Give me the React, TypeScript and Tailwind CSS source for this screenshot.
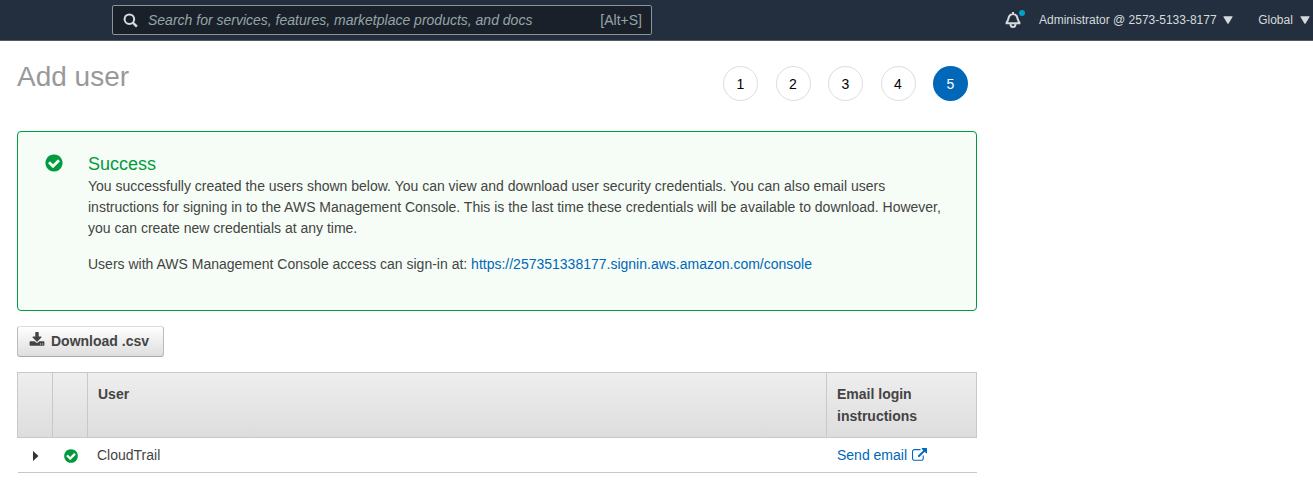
import React from "react";

const ICONS = {
  check:
    "M1412 734q0-28-18-46l-91-90q-19-19-45-19t-45 19l-408 407-226-226q-19-19-45-19t-45 19l-91 90q-18 18-18 46 0 27 18 45l362 362q19 19 45 19 27 0 46-19l543-543q18-18 18-45zm252 162q0 209-103 385.5t-279.5 279.5-385.5 103-385.5-103-279.5-279.5-103-385.5 103-385.5 279.5-279.5 385.5-103 385.5 103 279.5 279.5 103 385.5z",
  download:
    "M1344 1344q0-26-19-45t-45-19-45 19-19 45 19 45 45 19 45-19 19-45zm256 0q0-26-19-45t-45-19-45 19-19 45 19 45 45 19 45-19 19-45zm128-224v320q0 40-28 68t-68 28h-1472q-40 0-68-28t-28-68v-320q0-40 28-68t68-28h465l135 136q58 56 136 56t136-56l136-136h464q40 0 68 28t28 68zm-325-569q17 41-14 70l-448 448q-18 19-45 19t-45-19l-448-448q-31-29-14-70 17-39 59-39h256v-448q0-26 19-45t45-19h256q26 0 45 19t19 45v448h256q42 0 59 39z",
  external:
    "M1408 928v320q0 119-84.5 203.5t-203.5 84.5h-832q-119 0-203.5-84.5t-84.5-203.5v-832q0-119 84.5-203.5t203.5-84.5h704q14 0 23 9t9 23v64q0 14-9 23t-23 9h-704q-66 0-113 47t-47 113v832q0 66 47 113t113 47h832q66 0 113-47t47-113v-320q0-14 9-23t23-9h64q14 0 23 9t9 23zm384-864v512q0 26-19 45t-45 19-45-19l-176-176-652 652q-10 10-23 10t-23-10l-114-114q-10-10-10-23t10-23l652-652-176-176q-19-19-19-45t19-45 45-19h512q26 0 45 19t19 45z",
};

function Icon({ name, className }: { name: keyof typeof ICONS; className: string }) {
  return (
    <svg viewBox="0 0 1792 1792" fill="currentColor" className={className}>
      <path d={ICONS[name]} />
    </svg>
  );
}

function Caret({ className }: { className: string }) {
  return (
    <svg viewBox="0 0 10 8" className={className} fill="#d5dbdb">
      <path d="M0.8 0.3h8.4q.7 0 .3.7L5.6 7.4q-.6.7-1.2 0L.5 1Q.1.3.8.3z" />
    </svg>
  );
}

function TopBar() {
  return (
    <header className="flex h-[41px] items-start border-b border-[#545b64] bg-[#232f3e] pl-28">
      <div className="mt-[5px] flex h-[30px] w-[540px] items-center rounded-[2px] border border-[#879596] bg-[#1a202a] pr-[9px] pl-[10px] text-[14px] text-[#95a5a6]">
        <svg viewBox="0 0 16 16" className="size-[15px]" fill="none" stroke="#d5dbdb" strokeWidth="2.2">
          <circle cx="6.8" cy="6.6" r="5.1" />
          <path d="M10.5 10.3l4.3 4.3" strokeWidth="2.6" />
        </svg>
        <span className="ml-[10px] italic">Search for services, features, marketplace products, and docs</span>
        <span className="ml-auto">[Alt+S]</span>
      </div>
      <div className="ml-[352px] flex h-10 items-center whitespace-nowrap text-[12px] text-[#d5dbdb]">
        <span className="relative flex size-[18px] items-center justify-center">
          <svg viewBox="0 0 18 18" className="size-[18px]" fill="none" stroke="#d5dbdb" strokeWidth="2" strokeLinejoin="round">
            <path d="M1.6 12.2h14.8M2 12.1C4.6 10 4 7.5 5.2 5.2Q6.4 3 9 3t3.8 2.2C14 7.5 13.4 10 16 12.1M9 1v2" />
            <path d="M6.6 13v1q.2 2 2.4 2t2.4-2v-1" />
          </svg>
          <span className="absolute top-[-1px] left-[15px] size-[6px] rounded-full bg-[#00a1c9]" />
        </span>
        <span className="ml-[17px]">Administrator @ 2573-5133-8177</span>
        <Caret className="ml-[6px] h-2 w-[10px]" />
        <span className="ml-[25.5px]">Global</span>
        <Caret className="ml-[7px] h-2 w-[10px] shrink-0" />
      </div>
    </header>
  );
}

function Steps() {
  return (
    <ol className="mt-[25px] mr-[9px] flex gap-[17.5px] text-[14px] text-black">
      {[1, 2, 3, 4].map((n) => (
        <li key={n} className="flex size-[35px] items-center justify-center rounded-full border border-[#ddd] pt-[2px]">
          {n}
        </li>
      ))}
      <li className="flex size-[35px] items-center justify-center rounded-full bg-[#0067b9] pt-[2px] text-white">5</li>
    </ol>
  );
}

export default function App() {
  return (
    <div className="h-[480px] overflow-hidden bg-white font-['Liberation_Sans',Arial,sans-serif] text-[14px] text-[#444]">
      <TopBar />
      <main className="ml-[17px] w-[960px]">
        <div className="flex h-[90px] items-start justify-between">
          <h1 className="mt-[18px] text-[28px] leading-9 text-[#999]">Add user</h1>
          <Steps />
        </div>

        <section className="flex h-[180px] rounded-[4px] border border-[#009b3e] bg-[#f6fdf6] pl-[26px]">
          <Icon name="check" className="mt-[21px] size-5 shrink-0 text-[#009b3e]" />
          <div className="ml-6 w-[870px] pt-[21px] leading-[21px]">
            <h2 className="mb-px text-[18px] leading-[22px] text-[#009b3e]">Success</h2>
            <p>
              You successfully created the users shown below. You can view and download user security credentials. You can also email users
              <br />
              instructions for signing in to the AWS Management Console. This is the last time these credentials will be available to download. However,
              <br />
              you can create new credentials at any time.
            </p>
            <p className="mt-[15px]">
              Users with AWS Management Console access can sign-in at:{" "}
              <a className="text-[#0067b9]">https://257351338177.signin.aws.amazon.com/console</a>
            </p>
          </div>
        </section>

        <button className="mt-[15px] flex h-[31px] w-[147px] items-center rounded-[3px] border border-[#bbb] border-t-[#ddd] border-b-[#aaa] bg-linear-to-b from-white to-[#dedede] pl-[11px] font-bold">
          <Icon name="download" className="mb-[3px] size-4" />
          <span className="ml-[6px]">Download .csv</span>
        </button>

        <table className="mt-[15px] w-[960px] table-fixed border-collapse text-left">
          <colgroup>
            <col className="w-[35px]" />
            <col className="w-[35px]" />
            <col className="w-[739px]" />
            <col className="w-[150px]" />
          </colgroup>
          <thead>
            <tr className="h-[65px] bg-linear-to-b from-[#eee] to-[#ddd] align-top leading-[22px]">
              <th className="border border-[#c8c8c8]" />
              <th className="border border-[#c8c8c8]" />
              <th className="border border-[#c8c8c8] px-[10px] pt-[10px]">User</th>
              <th className="border border-[#c8c8c8] px-[10px] pt-[10px]">
                Email login
                <br />
                instructions
              </th>
            </tr>
          </thead>
          <tbody>
            <tr className="h-[35px] border-b border-[#c8c8c8]">
              <td>
                <svg viewBox="0 0 6 10" className="mt-[2px] ml-[15px] h-[10px] w-[6px]" fill="#333">
                  <path d="M0 0l5.5 5L0 10z" />
                </svg>
              </td>
              <td>
                <Icon name="check" className="mt-[2px] ml-[10px] size-4 text-[#009b3e]" />
              </td>
              <td className="pl-[9.5px]">CloudTrail</td>
              <td className="pl-[10.5px]">
                <a className="flex items-center text-[#0067b9]">
                  Send email
                  <Icon name="external" className="ml-[5px] size-[15px]" />
                </a>
              </td>
            </tr>
          </tbody>
        </table>
      </main>
    </div>
  );
}
